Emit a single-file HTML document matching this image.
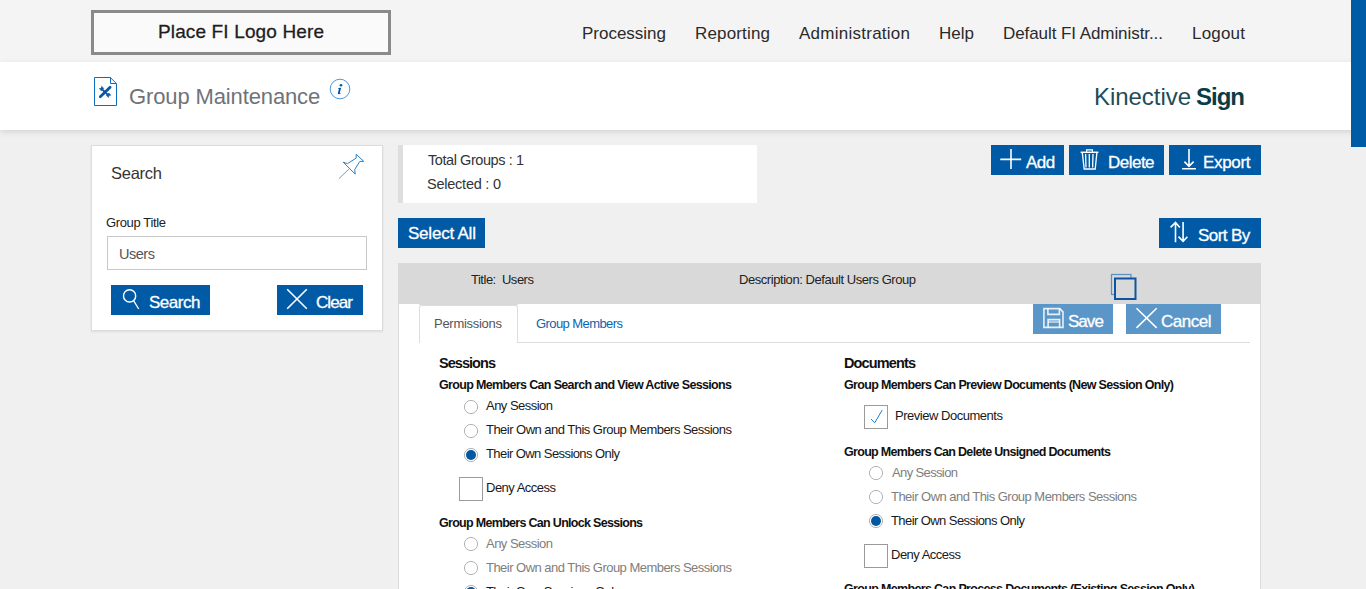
<!DOCTYPE html>
<html><head><meta charset="utf-8"><title>Group Maintenance</title>
<style>
html,body{margin:0;padding:0;width:1366px;height:589px;overflow:hidden;background:#f0f0f0;font-family:"Liberation Sans",sans-serif;}
.t{position:absolute;white-space:nowrap;line-height:1;}
.b{position:absolute;}
</style></head><body>
<div class="b" style="left:0px;top:0px;width:1366px;height:62px;background:#f4f4f4"></div>
<div class="b" style="left:91px;top:10px;width:300px;height:45px;border:3px solid #8a8a8a;box-sizing:border-box;background:#fafafa"></div>
<div class="t" style="left:158.00px;top:22px;font-size:19px;letter-spacing:0.135px;color:#1e1e1e;-webkit-text-stroke:0.3px #1e1e1e;">Place FI Logo Here</div>
<div class="t" style="left:582.00px;top:25px;font-size:17px;letter-spacing:-0.011px;color:#2a2a2a;">Processing</div>
<div class="t" style="left:695.00px;top:25px;font-size:17px;letter-spacing:0.162px;color:#2a2a2a;">Reporting</div>
<div class="t" style="left:799.00px;top:25px;font-size:17px;letter-spacing:0.254px;color:#2a2a2a;">Administration</div>
<div class="t" style="left:939.00px;top:25px;font-size:17px;color:#2a2a2a;">Help</div>
<div class="t" style="left:1003.00px;top:25px;font-size:17px;letter-spacing:-0.073px;color:#2a2a2a;">Default FI Administr...</div>
<div class="t" style="left:1192.00px;top:25px;font-size:17px;letter-spacing:0.200px;color:#2a2a2a;">Logout</div>
<div class="b" style="left:0px;top:62px;width:1366px;height:68px;background:#fff;box-shadow:0 2px 6px rgba(0,0,0,0.12)"></div>
<svg class="b" style="left:88px;top:72px" width="36" height="40" viewBox="88 72 36 40">
<path d="M94.5 77.5 H110.3 L116.5 83.7 V105.5 H94.5 Z" fill="none" stroke="#0a6ec0" stroke-width="1"/>
<path d="M110.5 77.5 V83.5 H116.5" fill="none" stroke="#0a6ec0" stroke-width="1"/>
<path d="M110.1 87.2 L100.3 96.8" stroke="#0a55a3" stroke-width="2.7" stroke-linecap="round"/>
<path d="M102.2 89.4 L107.6 94.6" stroke="#0a55a3" stroke-width="2"/>
<path d="M99.2 88.6 L101.3 90.7 L103.7 88.4 L101.7 86.2 L101.2 88.3 Z M110.9 95.2 L108.8 93.1 L106.4 95.4 L108.4 97.6 L108.9 95.5 Z" fill="#0a55a3" stroke="#0a55a3" stroke-width="0.5" stroke-linejoin="round"/>
</svg>
<div class="t" style="left:129.00px;top:86px;font-size:22px;letter-spacing:-0.125px;color:#6f7379;">Group Maintenance</div>
<svg class="b" style="left:328px;top:77px" width="24" height="24" viewBox="328 77 24 24">
<circle cx="340" cy="89" r="9.8" fill="none" stroke="#2f86cf" stroke-width="0.85"/>
<circle cx="341" cy="85.3" r="1.3" fill="#0a55a3"/>
<path d="M338.1 87.9 L341.2 87.7 L339.9 92.6 Q339.8 93.2 340.6 92.9 L340.4 93.8 Q339.3 94.3 338.3 94.1 Q337.7 93.8 337.9 93 L338.9 88.9 Q338.9 88.5 338 88.6 Z" fill="#0a55a3"/>
</svg>
<div class="t" style="left:1094.00px;top:85px;font-size:24px;letter-spacing:-0.050px;color:#1f4c55;">Kinective</div>
<div class="t" style="left:1196.00px;top:85px;font-size:24px;letter-spacing:-1.000px;font-weight:bold;color:#0b3c45;">Sign</div>
<div class="b" style="left:1351px;top:0px;width:15px;height:147px;background:#005ba6;z-index:50"></div>
<div class="b" style="left:91px;top:145px;width:292px;height:186px;background:#fff;border:1px solid #dcdcdc;box-sizing:border-box;box-shadow:0 1px 2px rgba(0,0,0,0.08)"></div>
<div class="t" style="left:111.00px;top:165px;font-size:16.5px;letter-spacing:-0.260px;color:#333;">Search</div>
<div class="t" style="left:106.00px;top:216px;font-size:13px;letter-spacing:-0.360px;color:#222;">Group Title</div>
<div class="b" style="left:107px;top:236px;width:260px;height:34px;border:1px solid #c8c8c8;box-sizing:border-box;background:#fff"></div>
<div class="t" style="left:119.00px;top:247px;font-size:14.5px;letter-spacing:-0.475px;color:#555;">Users</div>
<div class="b" style="left:111px;top:285px;width:99px;height:30px;background:#005aa6"></div>
<div class="t" style="left:149.00px;top:294px;font-size:17px;letter-spacing:-0.480px;color:#fff;-webkit-text-stroke:0.3px #fff;">Search</div>
<div class="b" style="left:277px;top:285px;width:86px;height:30px;background:#005aa6"></div>
<div class="t" style="left:316.00px;top:294px;font-size:17px;letter-spacing:-0.950px;color:#fff;-webkit-text-stroke:0.3px #fff;">Clear</div>
<div class="b" style="left:398px;top:145px;width:359px;height:58px;background:#fff;border-left:5px solid #dedede;box-sizing:border-box"></div>
<div class="t" style="left:428.00px;top:153px;font-size:14.5px;letter-spacing:-0.427px;color:#333;">Total Groups : 1</div>
<div class="t" style="left:427.00px;top:177px;font-size:14.5px;letter-spacing:-0.236px;color:#333;">Selected : 0</div>
<div class="b" style="left:991px;top:145px;width:73px;height:30px;background:#005aa6"></div>
<div class="b" style="left:1069px;top:145px;width:95px;height:30px;background:#005aa6"></div>
<div class="b" style="left:1169px;top:145px;width:92px;height:30px;background:#005aa6"></div>
<div class="t" style="left:1026.00px;top:154px;font-size:17px;letter-spacing:-0.550px;color:#fff;-webkit-text-stroke:0.3px #fff;">Add</div>
<div class="t" style="left:1108.00px;top:154px;font-size:17px;letter-spacing:-0.520px;color:#fff;-webkit-text-stroke:0.3px #fff;">Delete</div>
<div class="t" style="left:1203.00px;top:154px;font-size:17px;letter-spacing:-0.320px;color:#fff;-webkit-text-stroke:0.3px #fff;">Export</div>
<div class="b" style="left:398px;top:218px;width:87px;height:30px;background:#005aa6"></div>
<div class="t" style="left:408.00px;top:225px;font-size:17px;letter-spacing:-0.222px;color:#fff;-webkit-text-stroke:0.3px #fff;">Select All</div>
<div class="b" style="left:1159px;top:218px;width:102px;height:30px;background:#005aa6"></div>
<div class="t" style="left:1198.00px;top:227px;font-size:17px;letter-spacing:-0.567px;color:#fff;-webkit-text-stroke:0.3px #fff;">Sort By</div>
<div class="b" style="left:398px;top:263px;width:863px;height:326px;background:#fff;border-left:1px solid #dcdcdc;border-right:1px solid #dcdcdc;box-sizing:border-box"></div>
<div class="b" style="left:398px;top:263px;width:863px;height:41px;background:#d9d9d9"></div>
<div class="b" style="left:419px;top:304px;width:99px;height:1px;background:#d9d9d9"></div>
<div class="t" style="left:471.00px;top:273px;font-size:13px;letter-spacing:-0.492px;color:#222;">Title:&nbsp;&nbsp;Users</div>
<div class="t" style="left:739.00px;top:273px;font-size:13px;letter-spacing:-0.442px;color:#222;">Description: Default Users Group</div>
<div class="b" style="left:419px;top:342px;width:831px;height:1px;background:#dddddd"></div>
<div class="b" style="left:419px;top:305px;width:99px;height:38px;background:#fff;border:1px solid #dddddd;border-bottom:none;border-radius:3px 3px 0 0;box-sizing:border-box"></div>
<div class="t" style="left:434.00px;top:317px;font-size:13px;letter-spacing:-0.280px;color:#555;">Permissions</div>
<div class="t" style="left:536.00px;top:317px;font-size:13px;letter-spacing:-0.575px;color:#0c64b0;">Group Members</div>
<div class="b" style="left:1033px;top:304px;width:80px;height:30px;background:#5b96c8"></div>
<div class="t" style="left:1068.00px;top:313px;font-size:17px;letter-spacing:-0.967px;color:#fff;-webkit-text-stroke:0.3px #fff;">Save</div>
<div class="b" style="left:1126px;top:304px;width:95px;height:30px;background:#5b96c8"></div>
<div class="t" style="left:1161.00px;top:313px;font-size:17px;letter-spacing:-0.500px;color:#fff;-webkit-text-stroke:0.3px #fff;">Cancel</div>
<div class="t" style="left:439.00px;top:356px;font-size:14.5px;letter-spacing:-0.957px;font-weight:bold;color:#111;">Sessions</div>
<div class="t" style="left:439.00px;top:379px;font-size:12.5px;letter-spacing:-0.654px;font-weight:bold;color:#111;">Group Members Can Search and View Active Sessions</div>
<svg class="b" style="left:463px;top:399px" width="16" height="16" viewBox="0 0 16 16"><circle cx="8" cy="8" r="6.6" fill="#fff" stroke="#a9a9a9" stroke-width="0.9"/></svg>
<svg class="b" style="left:463px;top:423px" width="16" height="16" viewBox="0 0 16 16"><circle cx="8" cy="8" r="6.6" fill="#fff" stroke="#a9a9a9" stroke-width="0.9"/></svg>
<svg class="b" style="left:463px;top:447px" width="16" height="16" viewBox="0 0 16 16"><circle cx="8" cy="8" r="6.6" fill="#fff" stroke="#a9a9a9" stroke-width="0.9"/><circle cx="8" cy="8" r="5" fill="#0058a3"/></svg>
<div class="t" style="left:486.00px;top:399px;font-size:13px;letter-spacing:-0.530px;color:#1a1a1a;">Any Session</div>
<div class="t" style="left:486.00px;top:423px;font-size:13px;letter-spacing:-0.527px;color:#1a1a1a;">Their Own and This Group Members Sessions</div>
<div class="t" style="left:486.00px;top:447px;font-size:13px;letter-spacing:-0.577px;color:#1a1a1a;">Their Own Sessions Only</div>
<svg class="b" style="left:459px;top:477px" width="24" height="24" viewBox="0 0 24 24"><rect x="0.5" y="0.5" width="23" height="23" fill="#fff" stroke="#9a9a9a" stroke-width="1"/></svg>
<div class="t" style="left:486.00px;top:481px;font-size:13px;letter-spacing:-0.510px;color:#1a1a1a;">Deny Access</div>
<div class="t" style="left:439.00px;top:517px;font-size:12.5px;letter-spacing:-0.700px;font-weight:bold;color:#111;">Group Members Can Unlock Sessions</div>
<svg class="b" style="left:463px;top:536px" width="16" height="16" viewBox="0 0 16 16"><circle cx="8" cy="8" r="6.6" fill="#fff" stroke="#a9a9a9" stroke-width="0.9"/></svg>
<svg class="b" style="left:463px;top:560px" width="16" height="16" viewBox="0 0 16 16"><circle cx="8" cy="8" r="6.6" fill="#fff" stroke="#a9a9a9" stroke-width="0.9"/></svg>
<svg class="b" style="left:463px;top:584px" width="16" height="16" viewBox="0 0 16 16"><circle cx="8" cy="8" r="6.6" fill="#fff" stroke="#a9a9a9" stroke-width="0.9"/><circle cx="8" cy="8" r="5" fill="#0058a3"/></svg>
<div class="t" style="left:486.00px;top:537px;font-size:13px;letter-spacing:-0.530px;color:#7e7e7e;">Any Session</div>
<div class="t" style="left:486.00px;top:561px;font-size:13px;letter-spacing:-0.527px;color:#7e7e7e;">Their Own and This Group Members Sessions</div>
<div class="t" style="left:486.00px;top:585px;font-size:13px;letter-spacing:-0.577px;color:#1a1a1a;">Their Own Sessions Only</div>
<div class="t" style="left:844.00px;top:356px;font-size:14.5px;letter-spacing:-0.875px;font-weight:bold;color:#111;">Documents</div>
<div class="t" style="left:844.00px;top:379px;font-size:12.5px;letter-spacing:-0.668px;font-weight:bold;color:#111;">Group Members Can Preview Documents (New Session Only)</div>
<svg class="b" style="left:864px;top:405px" width="24" height="24" viewBox="0 0 24 24"><rect x="0.5" y="0.5" width="23" height="23" fill="#fff" stroke="#9a9a9a" stroke-width="1"/><path d="M7 14 L10.7 17.8 L18.2 5.1" fill="none" stroke="#1f7ac6" stroke-width="1"/></svg>
<div class="t" style="left:895.00px;top:409px;font-size:13px;letter-spacing:-0.475px;color:#1a1a1a;">Preview Documents</div>
<div class="t" style="left:844.00px;top:446px;font-size:12.5px;letter-spacing:-0.688px;font-weight:bold;color:#111;">Group Members Can Delete Unsigned Documents</div>
<svg class="b" style="left:868px;top:465px" width="16" height="16" viewBox="0 0 16 16"><circle cx="8" cy="8" r="6.6" fill="#fff" stroke="#a9a9a9" stroke-width="0.9"/></svg>
<svg class="b" style="left:868px;top:489px" width="16" height="16" viewBox="0 0 16 16"><circle cx="8" cy="8" r="6.6" fill="#fff" stroke="#a9a9a9" stroke-width="0.9"/></svg>
<svg class="b" style="left:868px;top:513px" width="16" height="16" viewBox="0 0 16 16"><circle cx="8" cy="8" r="6.6" fill="#fff" stroke="#a9a9a9" stroke-width="0.9"/><circle cx="8" cy="8" r="5" fill="#0058a3"/></svg>
<div class="t" style="left:892.00px;top:466px;font-size:13px;letter-spacing:-0.630px;color:#7e7e7e;">Any Session</div>
<div class="t" style="left:891.00px;top:490px;font-size:13px;letter-spacing:-0.528px;color:#7e7e7e;">Their Own and This Group Members Sessions</div>
<div class="t" style="left:891.00px;top:514px;font-size:13px;letter-spacing:-0.577px;color:#1a1a1a;">Their Own Sessions Only</div>
<svg class="b" style="left:864px;top:544px" width="24" height="24" viewBox="0 0 24 24"><rect x="0.5" y="0.5" width="23" height="23" fill="#fff" stroke="#9a9a9a" stroke-width="1"/></svg>
<div class="t" style="left:891.00px;top:548px;font-size:13px;letter-spacing:-0.510px;color:#1a1a1a;">Deny Access</div>
<div class="t" style="left:844.00px;top:583px;font-size:12.5px;letter-spacing:-0.667px;font-weight:bold;color:#111;">Group Members Can Process Documents (Existing Session Only)</div>
<svg class="b" style="left:330px;top:145px" width="45" height="45" viewBox="330 145 45 45"><path d="M343.2 162.2 L347.5 163.6 L356.2 158.1 L356.2 154.3 L363.8 161.4 L359.8 161.4 L354.7 169.6 L355.2 174.1 Z" fill="none" stroke="#2a7fc5" stroke-width="1" stroke-linejoin="round"/><path d="M348.8 169.2 L338.9 178.7" stroke="#2a7fc5" stroke-width="0.9" opacity="0.8"/></svg>
<svg class="b" style="left:115px;top:283px" width="30" height="34" viewBox="115 283 30 34"><circle cx="129.6" cy="295.9" r="6.1" fill="none" stroke="#fff" stroke-width="1.4"/><path d="M133.6 300.6 L138.7 309" stroke="#fff" stroke-width="1.3"/></svg>
<svg class="b" style="left:280px;top:283px" width="34" height="34" viewBox="280 283 34 34"><path d="M287.2 289.3 L306.8 308.7 M306.8 289.3 L287.2 308.7" stroke="#fff" stroke-width="1.6"/></svg>
<svg class="b" style="left:995px;top:145px" width="30" height="30" viewBox="995 145 30 30"><path d="M1000.3 159.4 H1021.2 M1011 149.1 V168.9" stroke="#fff" stroke-width="1.6"/></svg>
<svg class="b" style="left:1075px;top:145px" width="30" height="30" viewBox="1075 145 30 30"><path d="M1080.6 152.3 H1098.4" stroke="#fff" stroke-width="1.5"/><path d="M1086.6 152 V149.8 H1092.4 V152" fill="none" stroke="#fff" stroke-width="1.2"/><path d="M1082.3 152.6 L1084.2 169 H1095.2 L1096.9 152.6" fill="none" stroke="#fff" stroke-width="1.3"/><path d="M1085.6 154 L1086 167.6 M1089.3 154 V167.6 M1093 154 L1092.6 167.6" stroke="#fff" stroke-width="1.3"/></svg>
<svg class="b" style="left:1175px;top:145px" width="30" height="30" viewBox="1175 145 30 30"><path d="M1189 149.1 V166.2 M1184.4 161.6 L1189 166.3 L1193.6 161.6 M1182.1 168.7 H1195.9" fill="none" stroke="#fff" stroke-width="1.6"/></svg>
<svg class="b" style="left:1164px;top:218px" width="30" height="30" viewBox="1164 218 30 30"><path d="M1175.5 222.6 V242.2 M1170.6 227.4 L1175.5 222.4 L1179.8 227.4 M1183.1 222 V241.2 M1178.5 236.6 L1183.1 241.4 L1187.4 236.8" fill="none" stroke="#fff" stroke-width="1.6"/></svg>
<svg class="b" style="left:1105px;top:268px" width="40" height="40" viewBox="1105 268 40 40"><rect x="1111.5" y="274.5" width="19.5" height="20" fill="none" stroke="#5a8fc4" stroke-width="1.2"/><rect x="1115" y="278.5" width="20.5" height="20.5" fill="#d9d9d9" stroke="#0d55a0" stroke-width="2"/></svg>
<svg class="b" style="left:1038px;top:304px" width="30" height="30" viewBox="1038 304 30 30"><g fill="none" stroke="rgba(255,255,255,0.85)" stroke-width="1.6"><path d="M1043.9 308.6 H1059.8 L1063 311.9 V327.4 H1043.9 Z"/><path d="M1047.9 308.6 V314.4 H1059.4 V308.6"/><path d="M1048.1 327.4 V319.6 H1059.6 V327.4"/><path d="M1048.1 322 H1059.6" stroke-width="1.2"/></g></svg>
<svg class="b" style="left:1130px;top:304px" width="34" height="34" viewBox="1130 304 34 34"><path d="M1136.5 308.3 L1156.7 327.9 M1156.7 308.3 L1136.5 327.9" stroke="#fff" stroke-width="1.6"/></svg>
</body></html>
